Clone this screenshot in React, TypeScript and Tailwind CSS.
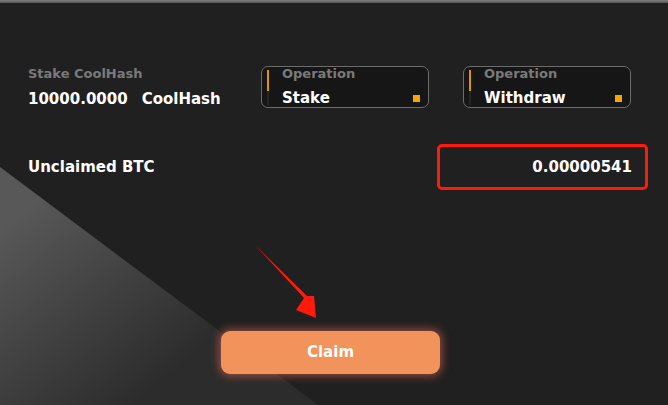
export default function App() {
  const font = { fontFamily: '"DejaVu Sans", Inter, sans-serif' }

  const OpBox = ({ label }: { label: string }) => (
    <div className="relative flex h-[42px] w-[168px] items-stretch rounded-[7px] border-[1.5px] border-[#6c6c6c] bg-[#161616]">
      <div className="ml-[5px] mt-[3px] flex w-[2px] flex-col">
        <div className="h-[21px] bg-[#d99a00]" />
        <div className="h-[14px] bg-[#262626]" />
      </div>
      <div className="ml-[13px] flex flex-col">
        <span className="mt-[-1px] text-[13px] font-bold leading-[16px] text-[#7a7a7a]">Operation</span>
        <span className="mt-[8px] text-[15px] font-bold leading-[16px] text-white">{label}</span>
      </div>
      <div className="absolute right-[8px] top-[28px] h-[7px] w-[7px] bg-[#f7a400]" />
    </div>
  )

  return (
    <div className="relative h-[405px] w-[668px] overflow-hidden bg-[#202020]" style={font}>
      {/* background wedge */}
      <svg className="absolute left-0 top-0" width="668" height="405">
        <defs>
          <linearGradient id="wedge" x1="0" y1="230" x2="140" y2="400" gradientUnits="userSpaceOnUse">
            <stop offset="0" stopColor="#585858" />
            <stop offset="1" stopColor="#2c2c2c" />
          </linearGradient>
        </defs>
        <polygon points="0,167 318,405 0,405" fill="url(#wedge)" />
      </svg>

      <div className="relative flex h-full flex-col">
        <div className="h-[3px] bg-gradient-to-b from-[#808080] to-[#555]" />

        {/* top row */}
        <div className="mt-[63px] flex items-start">
          <div className="ml-[28px] flex w-[233px] flex-col">
            <span className="text-[13px] font-bold leading-[16px] text-[#7a7a7a]">Stake CoolHash</span>
            <div className="mt-[8px] flex gap-[14px] text-[15px] font-bold leading-[18px] text-white">
              <span>10000.0000</span>
              <span>CoolHash</span>
            </div>
          </div>
          <OpBox label="Stake" />
          <div className="ml-[34px]">
            <OpBox label="Withdraw" />
          </div>
        </div>

        {/* unclaimed row */}
        <div className="mt-[36px] flex items-center">
          <span className="ml-[28px] text-[15px] font-bold text-white">Unclaimed BTC</span>
          <div className="ml-auto mr-[20px] flex h-[46px] w-[211px] items-center justify-end rounded-[5px] border-[3px] border-[#ff1a0e] pr-[13px]">
            <span className="text-[15px] font-bold text-white">0.00000541</span>
          </div>
        </div>

        {/* claim */}
        <div className="mt-[141px] flex">
          <button className="ml-[221px] flex h-[43px] w-[219px] items-center justify-center rounded-[9px] bg-[#f1935a] text-[15px] font-bold text-white shadow-[0_0_8px_2px_rgba(240,110,80,0.55)]">
            Claim
          </button>
        </div>
      </div>

      {/* red arrow */}
      <svg className="absolute left-0 top-0" width="668" height="405">
        <polygon points="256,246 304,298 296,310 316,318 314,296 307,296" fill="#ff1a0e" />
      </svg>
    </div>
  )
}
